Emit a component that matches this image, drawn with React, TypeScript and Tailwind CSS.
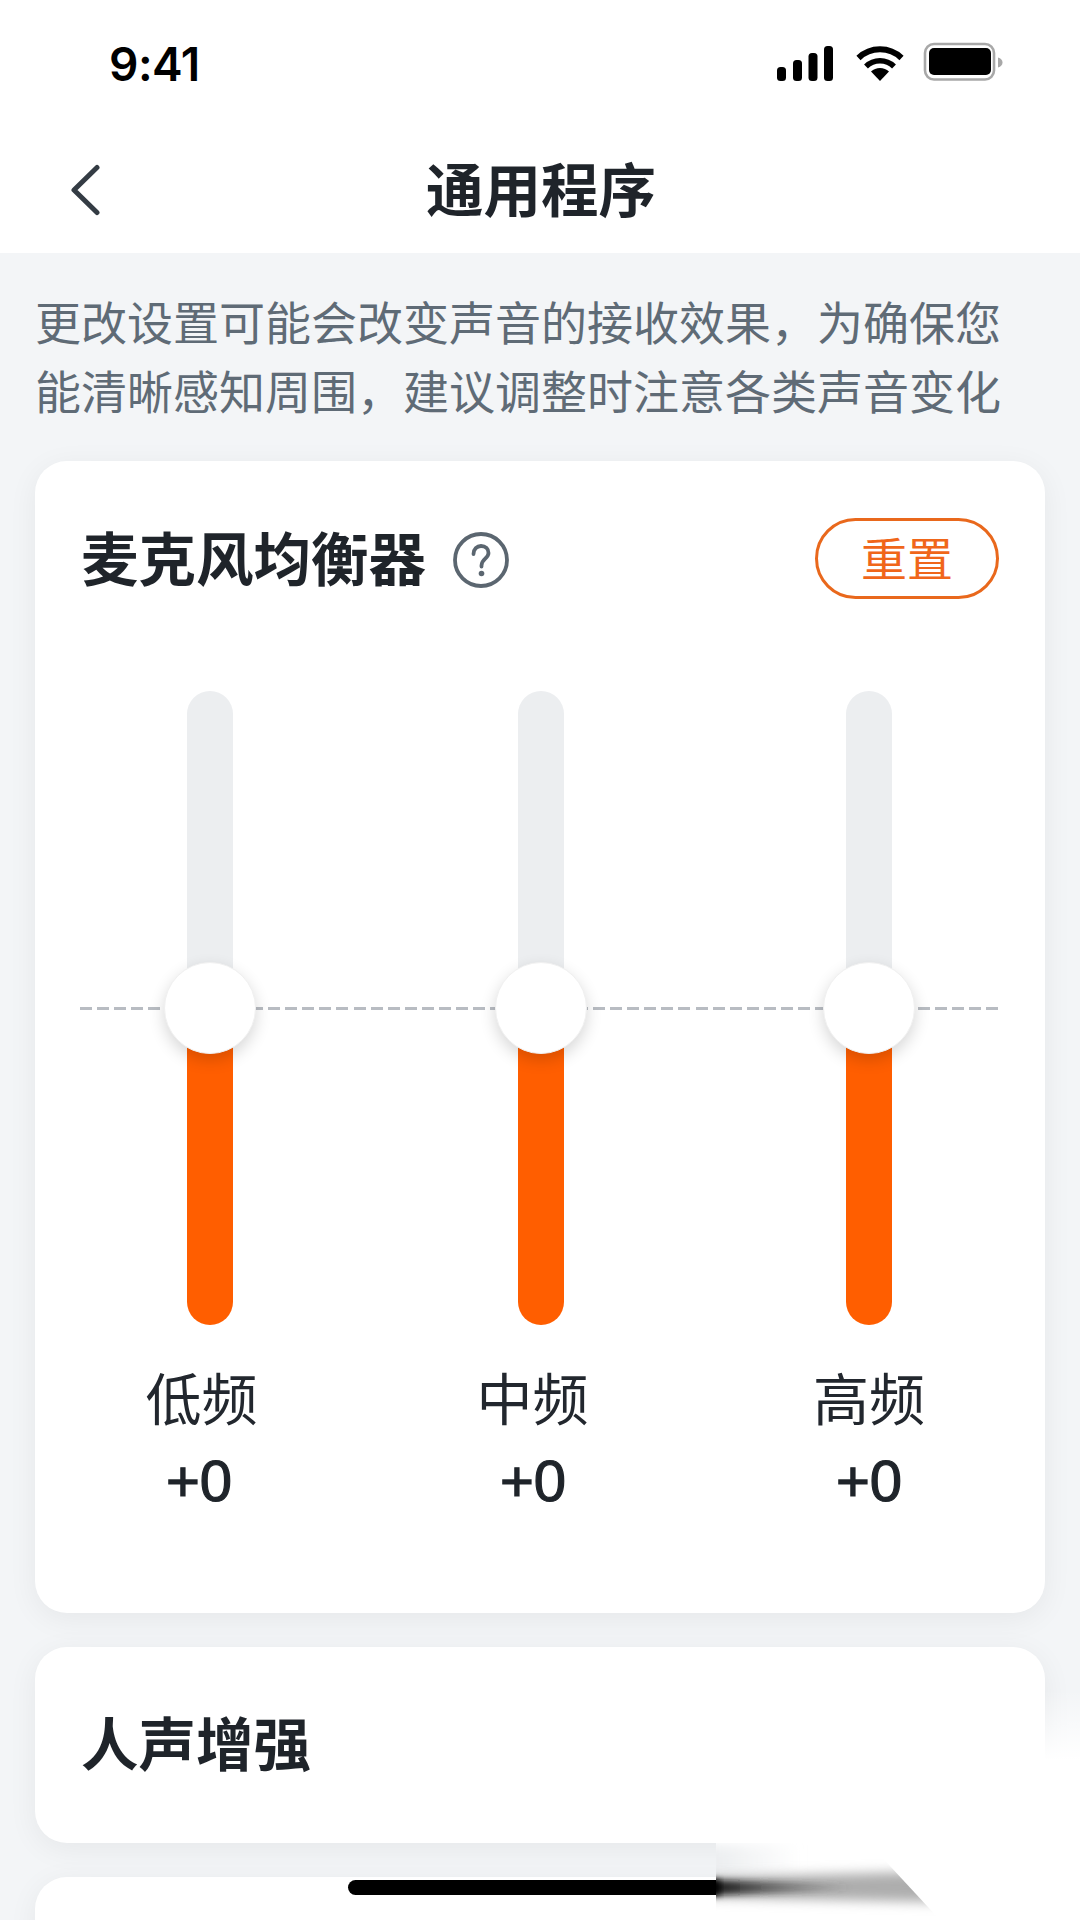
import React from "react";

const cjk = "font-['Inter','Noto_Sans_CJK_SC',sans-serif]";

const bands = [
  { name: "低频", col: "ml-[28px]", labelPad: "pr-[17px]", valuePad: "pr-[22px]" },
  { name: "中频", col: "ml-[131px]", labelPad: "pr-[17px]", valuePad: "pr-[16px]" },
  { name: "高频", col: "ml-[128px]", labelPad: "pl-[0px]", valuePad: "pl-[0px]" },
];

function StatusIcons() {
  return (
    <svg width="240" height="50" viewBox="770 40 240 50" className="block">
      <rect x="777" y="67" width="9" height="14" rx="3.5" fill="#000" />
      <rect x="793" y="60" width="9" height="21" rx="3.5" fill="#000" />
      <rect x="808.5" y="53" width="9" height="28" rx="3.5" fill="#000" />
      <rect x="824" y="46" width="9" height="35" rx="3.5" fill="#000" />
      <path d="M880 81 L871 71.5 A13 13 0 0 1 889 71.5 Z" fill="#000" />
      <path d="M866 66.5 A20 20 0 0 1 894 66.5" fill="none" stroke="#000" strokeWidth="5.5" />
      <path d="M858.5 58 A31 31 0 0 1 901.5 58" fill="none" stroke="#000" strokeWidth="6" />
      <rect x="925" y="44" width="69" height="35.5" rx="9" fill="none" stroke="#a8a8a8" strokeWidth="2.6" />
      <rect x="929" y="48" width="62" height="27" rx="5" fill="#000" />
      <path d="M998 57.5 C1001 58.5 1002.5 60 1002.5 62.5 C1002.5 65 1001 66.5 998 67.5 Z" fill="#a8a8a8" />
    </svg>
  );
}

function Slider() {
  return (
    <div className="relative h-[634px] w-[46px]">
      <div className="flex h-full w-full flex-col overflow-hidden rounded-full">
        <div className="h-[317px] bg-[#eceef0]" />
        <div className="h-[317px] bg-[#ff5e00]" />
      </div>
      <div className="absolute left-[-23px] top-[271px] h-[92px] w-[92px] rounded-full border border-[#f0f0f0] bg-white shadow-[0_6px_16px_rgba(0,0,0,0.16)]" />
    </div>
  );
}

function Smear() {
  return (
    <svg
      className="pointer-events-none absolute left-[716px] top-[1690px]"
      width="364"
      height="230"
      viewBox="716 1690 364 230"
    >
      <defs>
        <linearGradient id="rightFade" x1="0" y1="0" x2="0" y2="1">
          <stop offset="0" stopColor="#fff" stopOpacity="0" />
          <stop offset="1" stopColor="#fff" />
        </linearGradient>
        <linearGradient id="gapFade" x1="0" y1="0" x2="1" y2="0">
          <stop offset="0" stopColor="#eceef0" />
          <stop offset="0.3" stopColor="#eceef0" />
          <stop offset="1" stopColor="#eceef0" stopOpacity="0" />
        </linearGradient>
        <linearGradient id="core" x1="0" y1="0" x2="1" y2="0">
          <stop offset="0" stopColor="#000" />
          <stop offset="0.4" stopColor="#222" stopOpacity="0.6" />
          <stop offset="1" stopColor="#555" stopOpacity="0" />
        </linearGradient>
        <filter id="blurCore" x="-20%" y="-200%" width="140%" height="500%">
          <feGaussianBlur stdDeviation="3" />
        </filter>
        <filter id="blurBand" x="-20%" y="-100%" width="140%" height="300%">
          <feGaussianBlur stdDeviation="6" />
        </filter>
        <filter id="blurGap" x="-20%" y="-50%" width="140%" height="200%">
          <feGaussianBlur stdDeviation="6" />
        </filter>
        <clipPath id="wedge">
          <path d="M716 1843 L860 1843 L878 1853 L940 1920 L716 1920 Z" />
        </clipPath>
      </defs>
      <rect x="1045" y="1690" width="35" height="70" fill="url(#rightFade)" />
      <rect x="1045" y="1760" width="35" height="160" fill="#fff" />
      <rect x="1000" y="1800" width="45" height="43" fill="#fff" />
      <rect x="716" y="1843" width="364" height="77" fill="#fff" />
      <g clipPath="url(#wedge)">
        <rect x="680" y="1845" width="120" height="34" fill="url(#gapFade)" filter="url(#blurGap)" />
        <path d="M700 1878 L980 1870 L980 1903 L700 1897 Z" fill="#adadad" filter="url(#blurBand)" />
        <path d="M700 1880 L716 1880 L850 1884 L850 1891 L716 1895 L700 1895 Z" fill="url(#core)" filter="url(#blurCore)" />
        <rect x="700" y="1880" width="20" height="15" fill="#000" filter="url(#blurCore)" />
      </g>
    </svg>
  );
}

export default function App() {
  return (
    <div className={`relative h-[1920px] w-[1080px] overflow-hidden bg-[#f3f5f7] ${cjk}`}>
      <header className="h-[253px] bg-white">
        <div className="flex h-[126px] items-start justify-between">
          <span className="ml-[109px] mt-[36px] text-[46px] font-semibold leading-[56px] tracking-[-0.5px] text-black">
            9:41
          </span>
          <div className="mr-[70px] mt-[40px]">
            <StatusIcons />
          </div>
        </div>
        <div className="relative flex h-[127px] items-center justify-center">
          <svg
            className="absolute left-[68px] top-[36px]"
            width="34"
            height="54"
            viewBox="0 0 34 54"
            fill="none"
            stroke="#343c44"
            strokeWidth="5"
            strokeLinecap="round"
            strokeLinejoin="round"
          >
            <path d="M29 5.5 L6 28 L29 50.5" />
          </svg>
          <h1 className="ml-[2px] mt-[2px] text-[57.5px] font-bold leading-[72px] text-[#1f242a]">通用程序</h1>
        </div>
      </header>

      <p className="w-full pb-[34px] pl-[35px] pr-[70px] pt-[36px] text-[46px] leading-[69px] text-[#5f6b76]">
        更改设置可能会改变声音的接收效果，为确保您能清晰感知周围，建议调整时注意各类声音变化
      </p>

      <section className="mx-[35px] h-[1152px] rounded-[32px] bg-white pl-[47px] pr-[46px] pt-[57px] shadow-[0_6px_30px_rgba(0,0,0,0.06)]">
        <div className="flex h-[81px] items-center justify-between">
          <div className="ml-[-1px] mt-[3px] flex items-center gap-[27px]">
            <h2 className="text-[57.5px] font-bold leading-[72px] text-[#1f242a]">麦克风均衡器</h2>
            <svg width="56" height="56" viewBox="0 0 56 56" fill="none" stroke="#5b6670">
              <circle cx="28" cy="28" r="26" strokeWidth="3.8" />
              <path
                d="M20.5 22 C20.5 17 24 14 28 14 C32.5 14 35.5 17 35.5 21 C35.5 26.5 28.5 27 28.5 33.5 L28.5 34.5"
                strokeWidth="3.8"
                strokeLinecap="round"
              />
              <circle cx="28.5" cy="41.5" r="2.8" fill="#5b6670" stroke="none" />
            </svg>
          </div>
          <button className="flex h-[81px] w-[184px] items-center justify-center rounded-full border-[3px] border-[#e9681c] text-[46px] leading-none text-[#f0661a]">
            重置
          </button>
        </div>

        <div className="relative mt-[92px]">
          <div className="absolute left-[-2px] top-[316px] h-[3px] w-[918px] bg-[repeating-linear-gradient(90deg,#b8bcc2_0_12px,transparent_12px_17.1px)]" />
          <div className="relative flex">
            {bands.map((b) => (
              <div key={b.name} className={`flex w-[200px] flex-col items-center ${b.col}`}>
                <Slider />
                <div className={`mt-[35px] text-[56px] leading-[80px] text-[#22272e] ${b.labelPad}`}>{b.name}</div>
                <div className={`mt-[1px] font-['Liberation_Sans',sans-serif] text-[58px] leading-[80px] text-[#1f242a] [-webkit-text-stroke:1.2px_#1f242a] ${b.valuePad}`}>+0</div>
              </div>
            ))}
          </div>
        </div>
      </section>

      <section className="mx-[35px] mt-[34px] flex h-[196px] items-center rounded-[32px] bg-white pl-[46px] shadow-[0_6px_30px_rgba(0,0,0,0.06)]">
        <h2 className="text-[57.5px] font-bold leading-[72px] text-[#1f242a]">人声增强</h2>
      </section>

      <section className="mx-[35px] mt-[34px] h-[196px] rounded-[32px] bg-white shadow-[0_6px_30px_rgba(0,0,0,0.06)]" />

      <div className="absolute left-[348px] top-[1880px] h-[15px] w-[368px] rounded-l-full bg-black" />
      <Smear />
    </div>
  );
}
